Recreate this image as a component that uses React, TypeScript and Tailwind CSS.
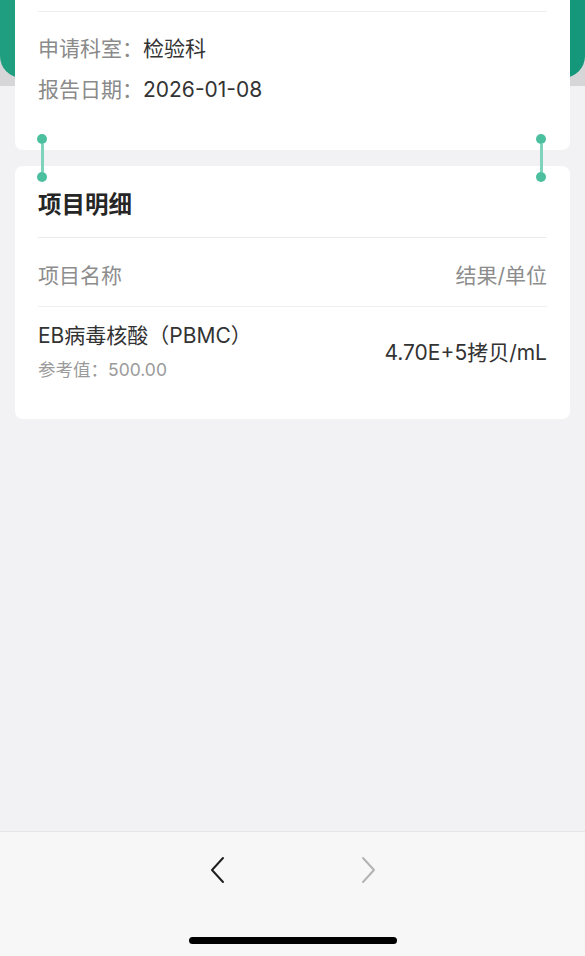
import React from 'react';

const font = { fontFamily: 'Inter, "Noto Sans CJK SC", "Noto Sans", sans-serif' };

const Connector: React.FC = () => (
  <div className="flex flex-col items-center w-[10px]">
    <div className="w-[10px] h-[10px] rounded-full bg-[#4cbf9f]" />
    <div className="w-[3px] h-[28px] bg-[#7fd2bc]" />
    <div className="w-[10px] h-[10px] rounded-full bg-[#4cbf9f]" />
  </div>
);

const App: React.FC = () => {
  return (
    <div className="relative w-[585px] h-[956px] overflow-hidden bg-[#f2f2f4] flex flex-col" style={font}>
      {/* header strip behind the first card */}
      <div className="h-[86px] bg-[#d6d6d8] shrink-0">
        <div className="h-[78px] bg-gradient-to-r from-[#1f9e80] via-[#18977a] to-[#14977a] rounded-b-[22px]" />
      </div>

      <div className="relative z-10 -mt-[106px] flex-1 px-[15px]">
        {/* info card, scrolled so its top is cut off */}
        <div className="bg-white rounded-[8px] px-[23px] pt-[31px] pb-[45px]">
          <div className="h-px bg-[#ededed]" />
          <div className="mt-[22px] flex items-center h-[30px] text-[21px]">
            <span className="text-[#8a8a8a]">申请科室：</span>
            <span className="text-[#333]">检验科</span>
          </div>
          <div className="mt-[11px] flex items-center h-[30px] text-[21px]">
            <span className="text-[#8a8a8a]">报告日期：</span>
            <span className="text-[#333]">2026-01-08</span>
          </div>
        </div>

        {/* connectors between cards */}
        <div className="relative h-[16px]">
          <div className="absolute left-[22px] -top-[16px] z-10">
            <Connector />
          </div>
          <div className="absolute right-[24px] -top-[16px] z-10">
            <Connector />
          </div>
        </div>

        {/* detail card */}
        <div className="bg-white rounded-[8px] px-[23px] pb-[34px]">
          <div className="pt-[24px] pb-[17px] h-[71px] text-[23.5px] leading-[30px] font-bold text-[#262626]">
            项目明细
          </div>
          <div className="h-px bg-[#ececec]" />
          <div className="pt-[23px] pb-[15px] h-[68px] leading-[30px] flex justify-between text-[21px] text-[#8d8d8d]">
            <span>项目名称</span>
            <span>结果/单位</span>
          </div>
          <div className="h-px bg-[#f0f0f0]" />
          <div className="pt-[14px] flex items-center justify-between">
            <div className="flex flex-col">
              <span className="text-[21px] text-[#333] leading-[30px]">EB病毒核酸（PBMC）</span>
              <span className="text-[17.5px] text-[#9a9a9a] leading-[30px] mt-[4px]">参考值：500.00</span>
            </div>
            <span className="text-[21px] text-[#333]">4.70E+5拷贝/mL</span>
          </div>
        </div>
      </div>

      {/* bottom toolbar */}
      <div className="h-[125px] shrink-0 bg-[#f7f7f7] border-t border-[#e6e6e8] relative">
        <div className="flex justify-center gap-[128px] pt-[24px]">
          <svg width="22" height="28" viewBox="0 0 22 28" fill="none">
            <polyline points="16,2 5,14 16,26" stroke="#1f1f1f" strokeWidth="2" strokeLinecap="round" strokeLinejoin="round" />
          </svg>
          <svg width="22" height="28" viewBox="0 0 22 28" fill="none">
            <polyline points="6,2 17,14 6,26" stroke="#b3b3b3" strokeWidth="2" strokeLinecap="round" strokeLinejoin="round" />
          </svg>
        </div>
        <div className="absolute left-[189px] top-[105px] w-[208px] h-[7px] rounded-full bg-black" />
      </div>
    </div>
  );
};

export default App;
